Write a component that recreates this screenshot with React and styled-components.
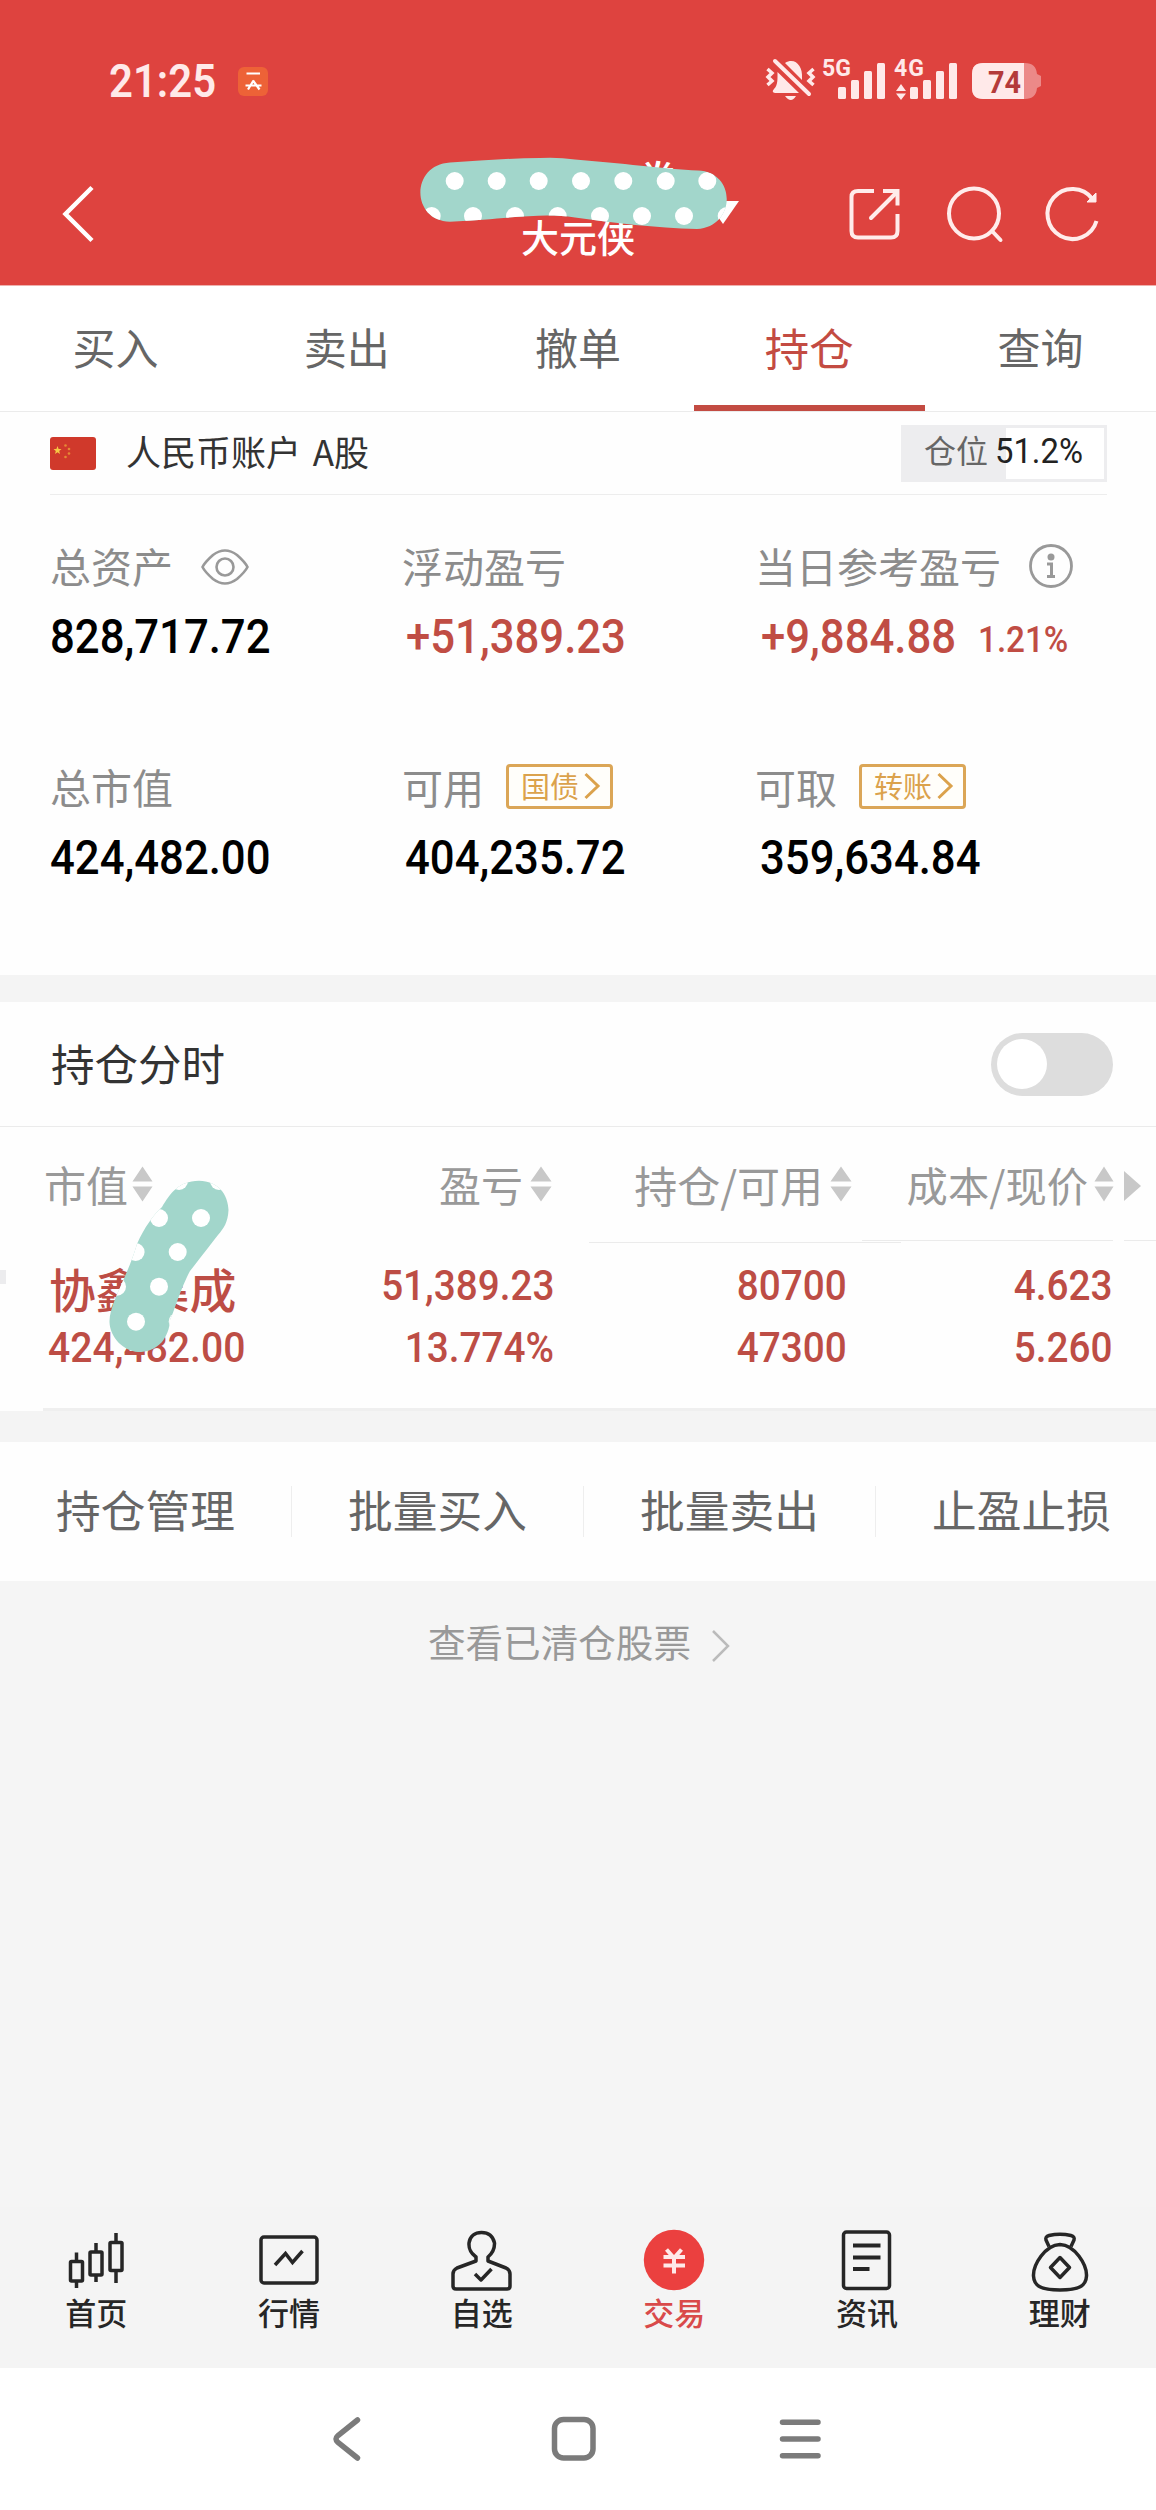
import React, { useState } from "react";
import styled, { createGlobalStyle } from "styled-components";

const GlobalStyle = createGlobalStyle`
  * {
    box-sizing: border-box;
  }
  body {
    margin: 0;
    background: #f4f4f4;
    font-family: "Noto Sans CJK SC", sans-serif;
  }
`;

const Page = styled.div`
  width: 1156px;
  height: 2510px;
  display: flex;
  flex-direction: column;
  overflow: hidden;
  background: #f5f5f5;
`;

const Icon = styled.svg`
  display: block;
  flex: none;
  overflow: visible;
  fill: none;
  stroke: ${({ $solid }) => ($solid ? "none" : "currentColor")};
`;

// Roboto squeezed a little to look like the narrow DIN digits
const Num = styled.span`
  display: inline-block;
  font-family: Roboto, sans-serif;
  font-weight: ${({ $weight }) => $weight || 500};
  font-size: ${({ $size }) => $size}px;
  line-height: 1;
  white-space: nowrap;
  transform: scaleX(${({ $squeeze }) => $squeeze || 0.91});
  transform-origin: ${({ $origin }) => $origin || "left"} center;
`;

/* ---------- header ---------- */

const Header = styled.header`
  height: 286px;
  flex: none;
  background: #de433f;
  border-bottom: 1px solid #eeb0ad;
  color: #fff;
`;

const StatusBar = styled.div`
  height: 162px;
  padding: 0 114px 0 109px;
  display: flex;
  align-items: center;
  color: #ffe9e9;
`;

const AppBadge = styled.div`
  width: 30px;
  height: 29px;
  margin-left: 10px;
  border-radius: 6px;
  background: #ed6237;
`;

const StatusIcons = styled.div`
  margin-left: auto;
  display: flex;
  align-items: center;
`;

const NavBar = styled.div`
  height: 104px;
  padding: 0 58px 0 62px;
  display: flex;
  align-items: center;
  position: relative;
`;

const NavActions = styled.div`
  margin-left: auto;
  display: flex;
  align-items: center;
  gap: 48px;
  svg:last-child {
    margin-left: -3px;
  }
`;

const TitleBlock = styled.div`
  position: absolute;
  left: 420px;
  top: -6px;
  width: 322px;
`;

const Broker = styled.div`
  height: 58px;
  padding-left: 217px;
  display: flex;
  align-items: flex-start;
  gap: 29px;
  font-size: 41px;
  font-weight: 500;
  line-height: 44px;
`;

const Caret = styled.i`
  border: 16px solid transparent;
  border-top: 23px solid #fff;
  border-bottom: 0;
  margin-top: 45px;
`;

const UserName = styled.div`
  padding-left: 101px;
  margin-top: -2px;
  font-size: 38px;
  font-weight: 500;
  line-height: 48px;
`;

const Sticker = styled.svg`
  position: absolute;
  left: ${({ $x }) => $x}px;
  top: ${({ $y }) => $y}px;
  display: block;
`;

/* ---------- tabs ---------- */

const Tabs = styled.nav`
  height: 126px;
  flex: none;
  display: grid;
  grid-template-columns: repeat(5, 1fr);
  background: #fff;
  border-bottom: 1px solid #ebebeb;
`;

const Tab = styled.div`
  height: 125px;
  display: flex;
  justify-content: center;
  font-size: ${({ $active }) => ($active ? 44.5 : 43)}px;
  line-height: 121px;
  color: ${({ $active }) => ($active ? "#c34b42" : "#666")};
  border-bottom: 6px solid ${({ $active }) => ($active ? "#c34b42" : "transparent")};
`;

/* ---------- account ---------- */

const Account = styled.section`
  height: 563px;
  flex: none;
  padding: 0 50px;
  background: #fefefe;
`;

const AccountRow = styled.div`
  height: 83px;
  display: flex;
  align-items: center;
  border-bottom: 1px solid #ededed;
  margin-right: -1px;
`;

const AccountName = styled.div`
  margin-left: 30px;
  font-size: 35px;
  line-height: 50px;
  margin-top: -5px;
  word-spacing: 4px;
  color: #333;
`;

const Position = styled.div`
  width: 206px;
  height: 57px;
  margin-left: auto;
  padding: 0 0 4px 20px;
  display: flex;
  align-items: center;
  gap: 7px;
  border: 3px solid #ededef;
  background: linear-gradient(to right, #ededef 102px, #fff 102px);
  font-size: 32px;
  line-height: 44px;
  color: #666;
  white-space: nowrap;
`;

const PositionLabel = styled.span`
  margin-top: -4px;
`;

const Percent = styled(Num)`
  color: #222;
`;

const Stats = styled.div`
  display: grid;
  grid-template-columns: 352px 353px 351px;
  grid-auto-rows: 221px;
  padding-top: 37px;
`;

const StatLabel = styled.div`
  height: 66px;
  display: flex;
  align-items: center;
  font-size: 41px;
  line-height: 60px;
  color: #8c8c8c;
  white-space: nowrap;
  > svg {
    margin: ${({ $drop }) => $drop || 0}px 0 0 28px;
  }
`;

const StatValue = styled.div`
  height: 77px;
  display: flex;
  align-items: center;
  gap: 3px;
  padding-left: ${({ $inset }) => $inset || 0}px;
  color: ${({ $up }) => ($up ? "#c04d44" : "#000")};
`;

const DayRate = styled(Num)`
  margin-top: 8px;
`;

const LinkButton = styled.button`
  width: 107px;
  height: 45px;
  margin-left: 22px;
  padding: 0 0 3px 12px;
  display: flex;
  align-items: center;
  border: 3px solid #dba657;
  border-radius: 4px;
  background: #fffefa;
  color: #dba24c;
  font-family: inherit;
  font-size: 29px;
  line-height: 38px;
  svg {
    margin: 3px 0 0 5px;
  }
`;

/* ---------- holdings ---------- */

const Gap = styled.div`
  height: ${({ $h }) => $h}px;
  flex: none;
  background: #f4f4f4;
`;

const SwitchRow = styled.div`
  height: 125px;
  flex: none;
  padding: 0 43px 0 51px;
  display: flex;
  align-items: center;
  justify-content: space-between;
  background: #fefefe;
  border-bottom: 1px solid #ebebeb;
  font-size: 43.5px;
  line-height: 60px;
  color: #333;
`;

const SwitchLabel = styled.span`
  margin-top: -3px;
`;

const Track = styled.button`
  width: 122px;
  height: 63px;
  padding: 6px;
  border: 0;
  border-radius: 32px;
  background: #ddd;
  display: flex;
  justify-content: ${({ $on }) => ($on ? "flex-end" : "flex-start")};
`;

const Knob = styled.i`
  width: 50px;
  height: 50px;
  border-radius: 50%;
  background: #fff;
`;

const Table = styled.section`
  height: 284px;
  flex: none;
  position: relative;
  background: #fefefe;
`;

const tableColumns = "208px 300px 300px 262px 42px";

const HeadRow = styled.div`
  height: 113px;
  padding-left: 44px;
  display: grid;
  grid-template-columns: ${tableColumns};
  align-items: center;
  color: #999;
`;

const HeadCell = styled.div`
  display: flex;
  align-items: center;
  justify-content: ${({ $first }) => ($first ? "flex-start" : "flex-end")};
  gap: ${({ $gap }) => $gap}px;
  font-size: ${({ $size }) => $size || 42}px;
  line-height: 60px;
  white-space: nowrap;
`;

const More = styled.i`
  margin: 5px 0 0 10px;
  width: 0;
  border: 15px solid transparent;
  border-left: 17px solid #c8c8c8;
  border-right: 0;
`;

const Rule = styled.div`
  height: 1px;
  margin-bottom: 1px;
  display: flex;
  gap: 11px;
  padding-left: ${({ $from }) => $from}px;
  &::before {
    content: "";
    width: ${({ $width }) => $width}px;
    background: #ebebeb;
  }
  &::after {
    content: "";
    flex: ${({ $rest }) => ($rest ? 1 : 0)};
    background: #ebebeb;
  }
`;

const StockRow = styled.div`
  height: 164px;
  padding: 11px 0 0 44px;
  display: grid;
  grid-template-columns: ${tableColumns};
  grid-template-rows: 62px 62px;
  color: #bd4d45;
`;

const Cell = styled.div`
  display: flex;
  align-items: center;
  justify-content: ${({ $first }) => ($first ? "flex-start" : "flex-end")};
  margin-right: ${({ $shift }) => $shift || 0}px;
  padding-left: ${({ $first }) => ($first ? 4 : 0)}px;
`;

const StockName = styled.div`
  font-size: 46.8px;
  font-weight: 500;
  line-height: 62px;
  margin-top: 4px;
  padding-left: 1px;
  white-space: nowrap;
`;

const EdgeMark = styled.i`
  position: absolute;
  left: 0;
  top: 143px;
  width: 6px;
  height: 14px;
  background: #ececee;
`;

const TableEnd = styled.div`
  height: 3px;
  margin-left: 43px;
  background: #efefef;
`;

const Tools = styled.div`
  height: 139px;
  flex: none;
  display: grid;
  grid-template-columns: repeat(4, 292px);
  align-items: center;
  background: #fefefe;
`;

const Tool = styled.div`
  height: 51px;
  display: flex;
  justify-content: center;
  border-right: 1px solid #eee;
  font-size: 44.7px;
  line-height: 46px;
  color: #666;
`;

const Cleared = styled.div`
  flex: 1;
  padding: 33px 0 0 2px;
  display: flex;
  justify-content: center;
  align-items: flex-start;
  gap: 21px;
  font-size: 37.6px;
  line-height: 54px;
  color: #999;
  svg {
    margin-top: 16px;
  }
`;

/* ---------- bottom bars ---------- */

const BottomNav = styled.nav`
  height: 161px;
  flex: none;
  display: grid;
  grid-template-columns: repeat(6, 1fr);
  background: #f4f4f4;
`;

const BottomItem = styled.div`
  display: flex;
  flex-direction: column;
  align-items: center;
  padding-top: 22px;
  font-size: 31px;
  font-weight: 500;
  line-height: 40px;
  color: ${({ $active }) => ($active ? "#d94a4a" : "#262626")};
`;

const SystemNav = styled.div`
  height: 142px;
  flex: none;
  background: #fff;
  color: #7b7b7b;
  display: flex;
  align-items: center;
  padding-left: 332px;
`;

const SystemKey = styled.div`
  width: 44px;
  margin-right: ${({ $after }) => $after || 0}px;
`;

const TEAL = "#a2d6cb";

const titleDots = [
  ...[34.7, 76.7, 118.7, 161, 203.3, 245.7, 287.3].map((x) => [x, 25]),
  ...[11.7, 53, 95, 137.7, 180, 222, 264, 306.7].map((x) => [x, 60]),
];

const stockDots = [
  [73, 3], [113, 3], [53, 40], [95, 40], [29.6, 74], [71.7, 74],
  [11, 108.7], [53, 108.7], [30, 143.7], [71.7, 143.7],
];

function TitleSticker() {
  return (
    <Sticker $x={0} $y={0} width="322" height="80">
      <clipPath id="titleClip">
        <path d="M30 6.500 C60 5 90 2 120 2 Q138 1 155 3.500 C200 7 245 13 278 14.500 C317 16 316 71 277 73 C235 72 195 67 155 61.500 C120 56 90 63 30 65.700 C-9 65 -10 9 30 6.500Z" />
      </clipPath>
      <g clipPath="url(#titleClip)">
        <rect width="322" height="80" fill={TEAL} />
        {titleDots.map(([x, y]) => (
          <circle key={`${x}-${y}`} cx={x} cy={y} r="9" fill="#fff" />
        ))}
      </g>
    </Sticker>
  );
}

function StockSticker() {
  return (
    <Sticker $x={106} $y={51} width="126" height="180">
      <clipPath id="stockClip">
        <path d="M3.500 144 C3 126 22 98 31 66 C38 50 48 36 56 29 C64 16 72 3 93 2.700 C112 3 122 16 122.500 32 C122 44 118 50 112 57 C104 67 92 83 84 93 C74 112 68 134 64 142 C64 150 60 159 56 164 C48 172 41 174 32 174 C18 173 4 160 3.500 144Z" />
      </clipPath>
      <g clipPath="url(#stockClip)">
        <rect width="126" height="180" fill={TEAL} />
        {stockDots.map(([x, y]) => (
          <circle key={`${x}-${y}`} cx={x} cy={y} r="9" fill="#fff" />
        ))}
      </g>
    </Sticker>
  );
}

function Signals() {
  return (
    <Icon $solid width="276" height="48" viewBox="766 57 276 48">
      {/* muted bell with vibration marks */}
      <g fill="#ffe9e9">
        <path d="M785 63 C795 57 803 66 802 78 V80Z" />
        <path d="M777.500 72 L799 93 H775 Q771 92 774 89 C778 85 777.500 79 777.500 72Z" />
        <path d="M785 96 H796 Q791 104 785 96Z" />
      </g>
      <path d="M775 61 L809 94" stroke="#ffe9e9" strokeWidth="4" strokeLinecap="round" />
      <path
        d="M767.500 69 L772 73 L768 77 L772 81 L767.500 85 M813.500 69 L809 73 L813 77 L809 81 L813.500 85"
        stroke="#ffe9e9"
        strokeWidth="3.500"
      />
      <g fill="#ffe9e9" fontFamily="Roboto, sans-serif" fontWeight="700" fontSize="23">
        <text x="822" y="75.500" textLength="29">5G</text>
        <text x="894" y="75.500" textLength="30">4G</text>
        {[838, 910].map((x) => (
          <g key={x}>
            <rect x={x} y="87" width="8" height="12" rx="1.500" />
            <rect x={x + 13} y="80" width="8" height="19" rx="1.500" />
            <rect x={x + 26} y="71" width="8" height="28" rx="1.500" />
            <rect x={x + 39} y="63" width="8" height="36" rx="1.500" />
          </g>
        ))}
        <path d="M896 91 L901 84 L906 91Z M896 93.500 L901 100 L906 93.500Z" />
      </g>
      <path
        d="M983 63 H1025 Q1036 63 1037 74 L1041 76 V86 L1037 88 Q1036 99 1025 99 H983 Q972 99 972 88 V74 Q972 63 983 63Z"
        fill="#ec8988"
      />
      <path d="M983 63 H1024 V99 H983 Q972 99 972 88 V74 Q972 63 983 63Z" fill="#ffe9e9" />
      <text
        x="988"
        y="92.500"
        fill="#b43a3a"
        fontFamily="Roboto, sans-serif"
        fontWeight="700"
        fontSize="32"
        textLength="33"
        lengthAdjust="spacingAndGlyphs"
      >
        74
      </text>
    </Icon>
  );
}

function SortIcon({ width = 22 }) {
  return (
    <Icon $solid width={width} height="36" viewBox="0 0 22 36" preserveAspectRatio="none">
      <path d="M0.500 15.500 L11 0.500 L21.500 15.500Z M0.500 20.500 L11 35.500 L21.500 20.500Z" fill="#c8c8c8" />
    </Icon>
  );
}

function Arrow() {
  return (
    <Icon width="16" height="26" viewBox="0 0 16 26" strokeWidth="3">
      <path d="M1.500 1 L14 13 L1.500 25" />
    </Icon>
  );
}

const bottomIcons = {
  首页: (
    <g strokeWidth="3.500">
      <rect x="10.500" y="32.500" width="12" height="19.500" rx="1" />
      <path d="M16.500 23.500 V32 M16.500 52 V59" />
      <rect x="30" y="23" width="12" height="23" rx="1" />
      <path d="M36 14 V23 M36 46 V53" />
      <rect x="50" y="13.500" width="12" height="28" rx="1" />
      <path d="M56 4 V13 M56 42 V54" />
    </g>
  ),
  行情: (
    <g strokeWidth="3.500">
      <rect x="8" y="8" width="56" height="46" rx="3" />
      <path d="M22 36 L32.500 24.500 L39.500 33.500 L49.500 22" />
    </g>
  ),
  自选: (
    <g strokeWidth="3.500" strokeLinejoin="round">
      <path d="M30 28 C22 22 23 17 23 14 C24 7 29 3.500 35.500 3.500 C42 3.500 47 7 48.500 14 C48.500 17 49 22 42 28 V32 L60 39 Q64 41 64 45 V57 Q64 60 61 60 H10 Q7 60 7 57 V45 Q7 41 11 39 L30 32Z" />
      <path d="M29 45 L35 51 L45.500 40" />
    </g>
  ),
  交易: (
    <g strokeWidth="4">
      <circle cx="36" cy="31" r="30.200" fill="#eb403f" stroke="none" />
      <path d="M28.500 20.500 L36 29 L43.500 20.500 M25.500 28 H47 M25.500 36.500 H47 M36 28 V44.500" stroke="#ffe9e9" />
    </g>
  ),
  资讯: (
    <g strokeWidth="3.500">
      <rect x="12.500" y="3" width="46" height="56.500" rx="3" />
      <path d="M22 16.500 H49.500 M22 28.500 H49.500 M22 40 H38.500" strokeWidth="4" />
    </g>
  ),
  理财: (
    <g strokeWidth="3.500" strokeLinejoin="round">
      <path d="M25 17.500 L22 11 Q21 7.500 25 6.500 Q36 4 47 6.500 Q51 7.500 50 11 L47 17.500" />
      <path d="M36 15.500 C51 16 63 36 62.500 47 C62 57 55 61 36 61 C17 61 10 57 9.500 47 C9 36 21 16 36 15.500Z" />
      <path d="M36 28.500 L45.500 38.500 L36 48.500 L26.500 38.500Z" />
    </g>
  ),
};

// distance from the column's right edge
const cellShifts = [-2, 5, 2];

const rows = [
  ["51,389.23", "80700", "4.623"],
  ["13.774%", "47300", "5.260"],
];

export default function App() {
  const [intraday, setIntraday] = useState(false);
  const [tab, setTab] = useState("持仓");

  return (
    <>
      <GlobalStyle />
      <Page>
        <Header>
          <StatusBar>
            <Num $size={46.5} $weight={600} $squeeze={0.9}>
              21:25
            </Num>
            <AppBadge>
              <Icon width="30" height="29" viewBox="0 0 30 29" strokeWidth="2.200">
                <path d="M8.500 6.500 H22 M7.500 18.500 H23.500 M15.500 13.500 L10 22.500 M15 13.500 L21.500 22.500" stroke="#fff" />
              </Icon>
            </AppBadge>
            <StatusIcons>
              <Signals />
            </StatusIcons>
          </StatusBar>

          <NavBar>
            <Icon width="32" height="56" viewBox="0 0 32 56" strokeWidth="4.500">
              <path d="M30 1.500 L3.500 28 L30 54.500" />
            </Icon>
            <TitleBlock>
              <Broker>
                券
                <Caret />
              </Broker>
              <UserName>大元侠</UserName>
              <TitleSticker />
            </TitleBlock>
            <NavActions>
              <Icon width="51" height="52" viewBox="0 0 51 52" strokeWidth="4" color="#ffeceb">
                <path d="M25 3 H9 Q2.500 3 2.500 9 V43 Q2.500 49.500 9 49.500 H42 Q48.500 49.500 48.500 43 V26" />
                <path d="M22 30 L47 5" strokeLinecap="round" />
                <path d="M34 3 H48.500 V17.500" />
              </Icon>
              <Icon width="54" height="56" viewBox="0 0 54 56" strokeWidth="4" color="#ffeceb">
                <circle cx="26" cy="27.500" r="25" />
                <path d="M44 45 L52.500 54" strokeLinecap="round" />
              </Icon>
              <Icon width="51" height="54" viewBox="0 0 51 54" strokeWidth="4" color="#ffeceb">
                <path d="M49.500 34 A25 25 0 1 1 45.500 12" />
                <path d="M49 6 V15 H40Z" fill="currentColor" strokeWidth="1" />
              </Icon>
            </NavActions>
          </NavBar>
        </Header>

        <Tabs>
          {["买入", "卖出", "撤单", "持仓", "查询"].map((name) => (
            <Tab key={name} $active={name === tab} onClick={() => setTab(name)}>
              {name}
            </Tab>
          ))}
        </Tabs>

        <Account>
          <AccountRow>
            <Icon $solid width="46" height="33" viewBox="0 0 46 33">
              <rect width="46" height="33" rx="3" fill="#d0392b" />
              <path d="M7.500 9 L8.600 12 H11.500 L9.200 14 L10 17 L7.500 15.300 L5 17 L5.800 14 L3.500 12 H6.400Z" fill="#f6c945" />
              <g fill="#e58a35">
                <circle cx="15.500" cy="8.500" r="1.300" />
                <circle cx="19" cy="12" r="1.300" />
                <circle cx="19" cy="16.500" r="1.300" />
                <circle cx="15.500" cy="20" r="1.300" />
              </g>
            </Icon>
            <AccountName>人民币账户 A股</AccountName>
            <Position>
              <PositionLabel>仓位</PositionLabel>
              <Percent $size={34.5} $weight={400} $squeeze={0.95}>
                51.2%
              </Percent>
            </Position>
          </AccountRow>

          <Stats>
            <div>
              <StatLabel $drop={4}>
                总资产
                <Icon width="48" height="36" viewBox="0 0 48 36" strokeWidth="2.600" color="#999">
                  <path d="M1.500 18 Q4 13 12 6 Q24 -3 36 6 Q44 13 46.500 18 Q44 23 36 30 Q24 39 12 30 Q4 23 1.500 18Z" />
                  <circle cx="24" cy="18" r="8.500" />
                </Icon>
              </StatLabel>
              <StatValue>
                <Num $size={48}>828,717.72</Num>
              </StatValue>
            </div>
            <div>
              <StatLabel>浮动盈亏</StatLabel>
              <StatValue $up $inset={4}>
                <Num $size={48}>+51,389.23</Num>
              </StatValue>
            </div>
            <div>
              <StatLabel $drop={2}>
                当日参考盈亏
                <Icon width="44" height="44" viewBox="0 0 44 44" strokeWidth="2.800" color="#999">
                  <circle cx="22" cy="22" r="20.500" />
                  <circle cx="22" cy="13" r="3.500" fill="currentColor" stroke="none" />
                  <path d="M18 20 H22.500 V32 M18 32.500 H26" strokeWidth="3" />
                </Icon>
              </StatLabel>
              <StatValue $up $inset={6}>
                <Num $size={48}>+9,884.88</Num>
                <DayRate $size={36.5}>1.21%</DayRate>
              </StatValue>
            </div>
            <div>
              <StatLabel>总市值</StatLabel>
              <StatValue>
                <Num $size={48}>424,482.00</Num>
              </StatValue>
            </div>
            <div>
              <StatLabel>
                可用
                <LinkButton>
                  国债
                  <Arrow />
                </LinkButton>
              </StatLabel>
              <StatValue $inset={3}>
                <Num $size={48}>404,235.72</Num>
              </StatValue>
            </div>
            <div>
              <StatLabel>
                可取
                <LinkButton>
                  转账
                  <Arrow />
                </LinkButton>
              </StatLabel>
              <StatValue $inset={5}>
                <Num $size={48}>359,634.84</Num>
              </StatValue>
            </div>
          </Stats>
        </Account>

        <Gap $h={27} />

        <SwitchRow>
          <SwitchLabel>持仓分时</SwitchLabel>
          <Track $on={intraday} onClick={() => setIntraday(!intraday)}>
            <Knob />
          </Track>
        </SwitchRow>

        <Table>
          <HeadRow>
            <HeadCell $first $gap={4}>
              市值
              <SortIcon width={21} />
            </HeadCell>
            <HeadCell $gap={7}>
              盈亏
              <SortIcon />
            </HeadCell>
            <HeadCell $gap={7} $size={43}>
              持仓/可用
              <SortIcon />
            </HeadCell>
            <HeadCell $gap={6} $size={41.3}>
              成本/现价
              <SortIcon width={20} />
            </HeadCell>
            <More />
          </HeadRow>
          <Rule $from={862} $width={251} $rest />
          <Rule $from={589} $width={312} />
          <StockRow>
            <Cell $first>
              <StockName>协鑫集成</StockName>
            </Cell>
            {rows[0].map((value, i) => (
              <Cell key={value} $shift={cellShifts[i]}>
                <Num $size={42.5} $origin="right">
                  {value}
                </Num>
              </Cell>
            ))}
            <span />
            <Cell $first>
              <Num $size={42.5} $squeeze={0.92}>
                424,482.00
              </Num>
            </Cell>
            {rows[1].map((value, i) => (
              <Cell key={value} $shift={cellShifts[i]}>
                <Num $size={42.5} $origin="right">
                  {value}
                </Num>
              </Cell>
            ))}
          </StockRow>
          <TableEnd />
          <EdgeMark />
          <StockSticker />
        </Table>

        <Gap $h={31} />

        <Tools>
          {["持仓管理", "批量买入", "批量卖出", "止盈止损"].map((name) => (
            <Tool key={name}>{name}</Tool>
          ))}
        </Tools>

        <Cleared>
          查看已清仓股票
          <Icon width="18" height="32" viewBox="0 0 18 32" strokeWidth="2.500" color="#bbb">
            <path d="M1 1 L16 16 L1 31" />
          </Icon>
        </Cleared>

        <BottomNav>
          {Object.keys(bottomIcons).map((name) => (
            <BottomItem key={name} $active={name === "交易"}>
              <Icon width="72" height="63" viewBox="0 0 72 63">
                {bottomIcons[name]}
              </Icon>
              {name}
            </BottomItem>
          ))}
        </BottomNav>

        <SystemNav>
          <SystemKey $after={175}>
            <Icon width="30" height="46" viewBox="0 0 30 46" strokeWidth="5.500" strokeLinecap="round">
              <path d="M25.500 4 L6 19.500 Q2 23 6 26.500 L25.500 42" />
            </Icon>
          </SystemKey>
          <SystemKey $after={184}>
            <Icon width="46" height="46" viewBox="0 0 46 46" strokeWidth="5.500">
              <rect x="3.500" y="3.500" width="38.500" height="38.500" rx="9" />
            </Icon>
          </SystemKey>
          <SystemKey>
            <Icon width="42" height="46" viewBox="0 0 42 46" strokeWidth="5.500" strokeLinecap="round">
              <path d="M3.500 6.300 H39 M3.500 23 H39 M3.500 39.700 H39" />
            </Icon>
          </SystemKey>
        </SystemNav>
      </Page>
    </>
  );
}
